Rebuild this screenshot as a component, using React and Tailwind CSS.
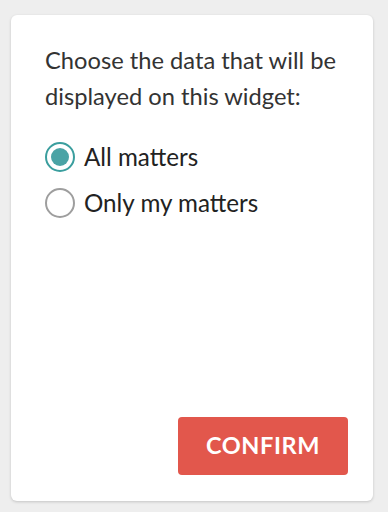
import React, { useState } from "react";

const options = [
  { id: "all", label: "All matters" },
  { id: "mine", label: "Only my matters" },
];

function Radio({ checked }) {
  return (
    <span
      className={
        "flex h-[30px] w-[30px] shrink-0 items-center justify-center rounded-full border-2 bg-white " +
        (checked ? "border-[#3a9e9e]" : "border-[#9e9e9e]")
      }
    >
      {checked && <span className="h-[18px] w-[18px] rounded-full bg-[#4aa3a5]" />}
    </span>
  );
}

export default function App() {
  const [value, setValue] = useState("all");

  return (
    <div
      className="min-h-[512px] w-[388px] bg-[#eeeeee] pt-[15px] pl-[11px]"
      style={{ fontFamily: "Lato, 'Open Sans', sans-serif" }}
    >
      <div className="flex h-[486px] w-[362px] flex-col rounded-md bg-white pl-[34px] pr-[25px] pt-[27px] pb-[26px] shadow-[0_1px_3px_rgba(0,0,0,0.18)]">
        <p className="text-[23.7px] leading-[36px] text-[#333333]">
          Choose the data that will be displayed on this widget:
        </p>

        <div className="mt-[28px] flex flex-col gap-[16px]">
          {options.map((o) => (
            <label
              key={o.id}
              className="flex cursor-pointer items-center gap-[9px] text-[24.2px] leading-[30px] text-[#222222]"
              onClick={() => setValue(o.id)}
            >
              <Radio checked={value === o.id} />
              <span>{o.label}</span>
            </label>
          ))}
        </div>

        <div className="mt-auto flex justify-end">
          <button className="h-[58px] w-[170px] rounded bg-[#e2574c] text-[23.5px] font-bold tracking-wide text-white">
            CONFIRM
          </button>
        </div>
      </div>
    </div>
  );
}
